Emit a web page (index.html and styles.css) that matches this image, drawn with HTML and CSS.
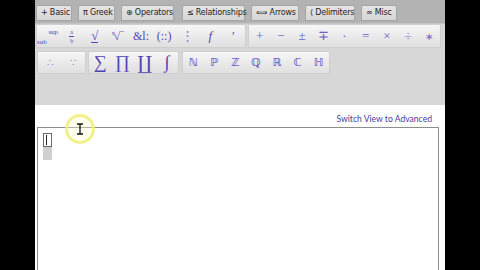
FILE: index.html
```html
<!DOCTYPE html>
<html>
<head>
<meta charset="utf-8">
<link rel="stylesheet" href="styles.css">
</head>
<body>
<div class="frame">
  <div class="tabs">
    <div class="tab t-basic">+ Basic</div>
    <div class="tab t-greek">π Greek</div>
    <div class="tab t-ops">⊕ Operators</div>
    <div class="tab t-rel">≤ Relationships</div>
    <div class="tab t-arr">⟺ Arrows</div>
    <div class="tab t-del">⟨ Delimiters</div>
    <div class="tab t-misc">∞ Misc</div>
  </div>
  <div class="toolbar">
    <div class="row">
      <div class="group g1">
        <div class="btn subsup"><span class="sub">sub</span><span class="sup">sup</span></div>
        <div class="btn frac"><span class="fr"><span>a</span><span class="bar"></span><span>b</span></span></div>
        <div class="btn sym"><span class="u">√</span></div>
        <div class="btn sym nroot"><span class="idx">n</span><span>√‾</span></div>
        <div class="btn sym amp">&amp;l:</div>
        <div class="btn sym amp">(::)</div>
        <div class="btn sym faint">⋮</div>
        <div class="btn sym it">f</div>
        <div class="btn sym">′</div>
      </div>
      <div class="group g2">
        <div class="btn sym op">+</div>
        <div class="btn sym op">−</div>
        <div class="btn sym op">±</div>
        <div class="btn sym op">∓</div>
        <div class="btn sym op">·</div>
        <div class="btn sym op">=</div>
        <div class="btn sym op">×</div>
        <div class="btn sym op">÷</div>
        <div class="btn sym dot">∗</div>
      </div>
    </div>
    <div class="row">
      <div class="group g3">
        <div class="btn sym small faint">∴</div>
        <div class="btn sym small faint">∵</div>
      </div>
      <div class="group g4">
        <div class="btn sym big">∑</div>
        <div class="btn sym big">∏</div>
        <div class="btn sym big">∐</div>
        <div class="btn sym big it">∫</div>
      </div>
      <div class="group g5">
        <div class="btn sym ds">ℕ</div>
        <div class="btn sym ds">ℙ</div>
        <div class="btn sym ds">ℤ</div>
        <div class="btn sym ds">ℚ</div>
        <div class="btn sym ds">ℝ</div>
        <div class="btn sym ds">ℂ</div>
        <div class="btn sym ds">ℍ</div>
      </div>
    </div>
  </div>
  <div class="linkbar"><span class="link">Switch View to Advanced</span></div>
  <div class="editor">
    <div class="block">
      <div class="box"><span class="caret"></span></div>
      <div class="shade"></div>
    </div>
  </div>
  <div class="pointer">
    <svg width="8" height="12" viewBox="0 0 8 12"><path d="M1 1h6M4 1v10M1 11h6" stroke="#111" stroke-width="1.3" fill="none"/></svg>
  </div>
</div>
</body>
</html>
```
FILE: styles.css
```css
html, body {
  margin: 0;
  padding: 0;
  background: #000;
}
body {
  font-family: Lato, "Liberation Sans", sans-serif;
  width: 480px;
  height: 270px;
  overflow: hidden;
}
.frame {
  position: relative;
  margin-left: 35px;
  width: 410px;
  height: 270px;
  background: #fff;
  display: flex;
  flex-direction: column;
  overflow: hidden;
}
.tabs {
  height: 24px;
  box-sizing: border-box;
  background: #b3b3b3;
  display: flex;
  align-items: flex-end;
  gap: 6px;
  padding: 0 0 2px 1px;
  border-bottom: 1px solid #c4c4c4;
}
.tab {
  height: 16px;
  box-sizing: border-box;
  background: linear-gradient(#e4e4e4, #d6d6d6);
  border: 1px solid #a4a4a4;
  border-radius: 2px 2px 0 0;
  font-size: 8px;
  color: #222;
  line-height: 14px;
  padding: 0 4px;
  white-space: nowrap;
  font-family: "DejaVu Sans", sans-serif;
  letter-spacing: -0.2px;
}
.t-basic { width: 36px; }
.t-greek { width: 37px; }
.t-ops { width: 53px; }
.t-rel { width: 63px; margin-left: 2px; }
.t-arr { width: 48px; }
.t-del { width: 50px; }
.t-misc { width: 36px; }
.toolbar {
  height: 81px;
  box-sizing: border-box;
  background: #d7d7d7;
  padding: 0 0 0 1px;
  display: flex;
  flex-direction: column;
  gap: 2px;
}
.row {
  display: flex;
  gap: 2px;
  height: 24px;
}
.row + .row {
  height: 23px;
  margin-top: 1px;
}
.group {
  display: flex;
  box-sizing: border-box;
  background: linear-gradient(#f7f7f7, #e8e8e8 60%, #e0e0e0);
  border: 1px solid #cfcfcf;
  border-radius: 2px;
}
.g1 { width: 210px; }
.g2 { width: 193px; }
.g3 { width: 49px; margin-left: 1px; }
.g4 { width: 91px; }
.g5 { width: 148px; margin-left: 1px; }
.btn {
  flex: 1;
  display: flex;
  align-items: center;
  justify-content: center;
  color: #5646b8;
  font-family: "Liberation Serif", serif;
  font-size: 13px;
  position: relative;
}
.sym { font-size: 13px; }
.op { color: #6a60cc; font-size: 13px; }
.small { font-size: 10px; }
.big { font-size: 18px; font-family: "Liberation Serif", "DejaVu Serif", serif; color: #5040b4; }
.it { font-style: italic; }
.faint { color: #8a84c0; }
.ds { font-size: 11px; font-weight: bold; font-family: "DejaVu Sans", sans-serif; color: #6c60c8; }
.amp { font-size: 12px; }
.dot { font-size: 10px; color: #6a64d0; }
.sub {
  position: absolute;
  left: 0;
  bottom: 1px;
  font-size: 7px;
}
.sup {
  position: absolute;
  right: 2px;
  top: 3px;
  font-size: 7px;
}
.fr {
  display: flex;
  flex-direction: column;
  align-items: center;
  font-size: 6px;
  line-height: 6px;
}
.bar {
  width: 5px;
  height: 1px;
  background: #5646b8;
  margin: 1px 0;
}
.u { border-bottom: 1px solid #5646b8; line-height: 12px; }
.nroot { align-items: flex-start; padding-top: 5px; font-size: 11px; }
.idx { font-size: 6px; line-height: 6px; margin-right: -1px; }
.linkbar {
  height: 22px;
  box-sizing: border-box;
  display: flex;
  align-items: flex-end;
  justify-content: flex-end;
  padding: 0 13px 3px 0;
}
.link {
  font-size: 8.6px;
  color: #4a3a9e;
  font-family: Lato, "Liberation Sans", sans-serif;
}
.editor {
  flex: 1;
  margin-left: 2px;
  width: 402px;
  box-sizing: border-box;
  border: 1px solid #8d8d8d;
  border-bottom: none;
  padding: 5px 0 0 5px;
}
.block {
  width: 9px;
}
.box {
  height: 14px;
  box-sizing: border-box;
  border: 1px solid #6a6a6a;
  background: #fff;
  position: relative;
}
.caret {
  position: absolute;
  left: 2px;
  top: 1px;
  width: 1px;
  height: 10px;
  background: #222;
}
.shade {
  height: 13px;
  background: #d0d0d0;
}
.pointer {
  position: absolute;
  left: 30px;
  top: 114px;
  width: 30px;
  height: 30px;
  box-sizing: border-box;
  border-radius: 50%;
  border: 3px solid rgba(238, 238, 120, 0.85);
  background: rgba(255, 255, 210, 0.35);
  display: flex;
  align-items: center;
  justify-content: center;
}
```
